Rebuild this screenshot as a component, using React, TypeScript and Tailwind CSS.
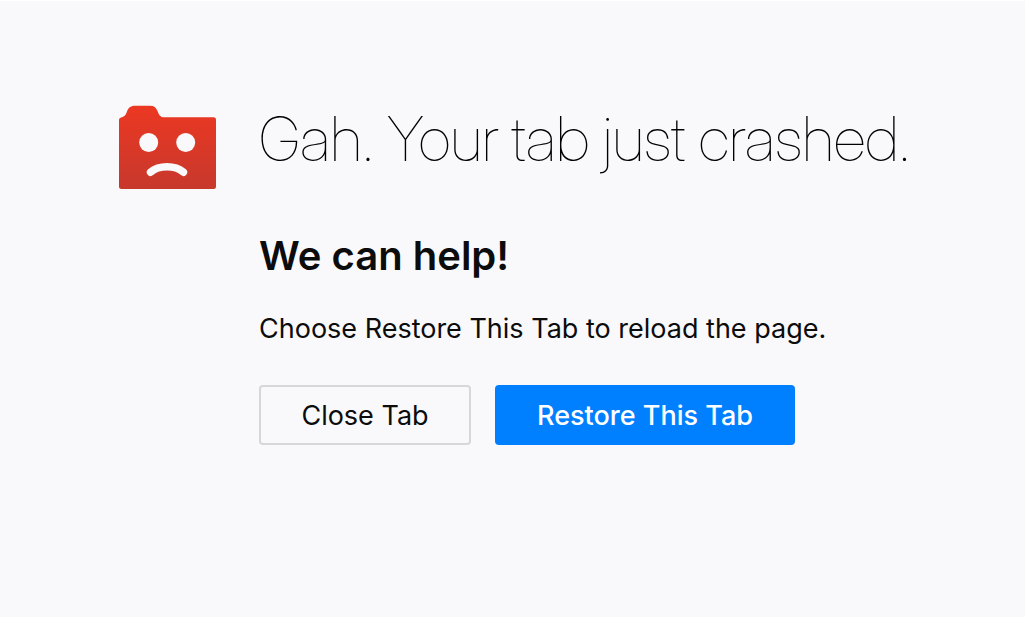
export default function App() {
  return (
    <main className="min-h-screen border-t border-b border-r border-white bg-[#f9f9fb] px-6 pt-[104px] pb-16 font-['Inter',sans-serif] text-[#0c0c0d] md:pl-[119px]">
      <div className="flex flex-wrap items-start gap-x-[43px] gap-y-6 md:flex-nowrap">
        <svg className="h-[84px] w-[97px] shrink-0" viewBox="0 0 97 84" role="img" aria-label="Crashed tab">
          <defs>
            <linearGradient id="folder" x1="0" y1="0" x2="0" y2="1">
              <stop offset="0" stopColor="#ec3823" />
              <stop offset="1" stopColor="#c7382c" />
            </linearGradient>
          </defs>
          <path fill="url(#folder)" d="M0 15C0 13 1.5 12.8 3.5 12C6.5 11 7 9 8 6.500C9 3 11.500 .7 16 .7H31C35 .7 37 2.500 38.500 6C40 10 41.500 12.300 45 12.300H94.500Q97 12.300 97 14.800V81.500Q97 84 94.500 84H2.500Q0 84 0 81.500Z" />
          <circle cx="29.700" cy="37.500" r="9.500" fill="#f9f9fb" />
          <circle cx="66.700" cy="37.500" r="9.500" fill="#f9f9fb" />
          <path d="M31.600 67.200C40 60 56 60 64.400 67.200" fill="none" stroke="#f9f9fb" strokeWidth="7.600" strokeLinecap="round" />
        </svg>
        <div className="min-w-0">
          <h1 className="font-['Inter_Display','Inter',sans-serif] text-[61px] leading-[68px] font-thin text-black">Gah. Your tab just crashed.</h1>
          <h2 className="mt-[58px] text-[40px] leading-[50px] font-semibold">We can help!</h2>
          <p className="mt-[30px] text-[27px] leading-[36px]">Choose Restore This Tab to reload the page.</p>
          <div className="mt-[38px] flex flex-wrap gap-6 text-[27px]">
            <button type="button" className="h-[60px] w-[212px] rounded border-2 border-[#d7d7db] pt-0.5">Close Tab</button>
            <button type="button" className="h-[60px] w-[300px] rounded bg-[#0080ff] pt-0.5 font-medium text-white">Restore This Tab</button>
          </div>
        </div>
      </div>
    </main>
  );
}
